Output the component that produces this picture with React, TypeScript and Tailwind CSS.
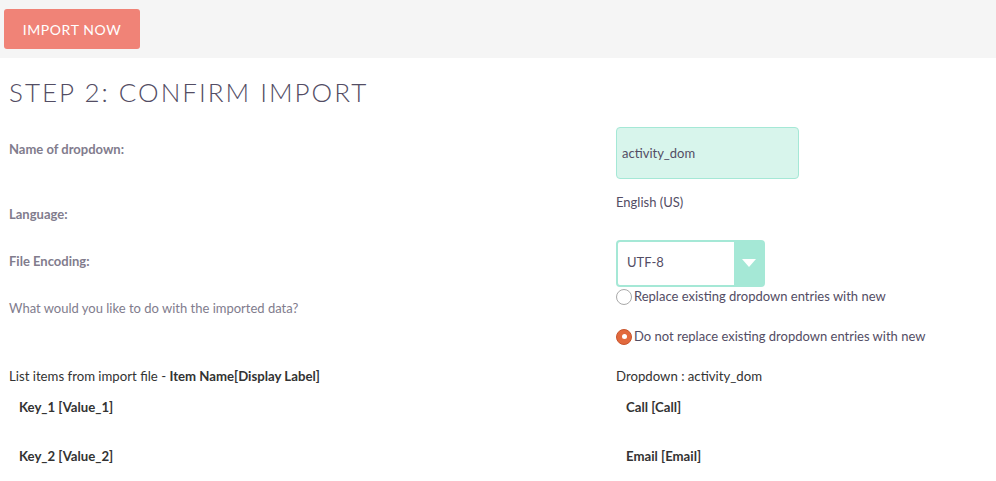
import React from 'react';

const font = { fontFamily: 'Lato, "Open Sans", sans-serif' };

function Radio({ checked, label }: { checked?: boolean; label: string }) {
  return (
    <label className="flex items-center text-[13px] text-[#534d64] leading-none">
      {checked ? (
        <span className="flex items-center justify-center w-4 h-4 rounded-full bg-[#e2693d] border border-[#c9552d]">
          <span className="w-[5px] h-[5px] rounded-full bg-white" />
        </span>
      ) : (
        <span className="w-4 h-4 rounded-full bg-white border border-[#a9a9a9]" />
      )}
      <span className="ml-[2px]">{label}</span>
    </label>
  );
}

export default function App() {
  return (
    <div className="w-[996px] h-[481px] bg-white overflow-hidden" style={font}>
      {/* Top bar */}
      <div className="h-[58px] bg-[#f5f5f5] pt-[9px] pl-[4px]">
        <button className="h-[40px] w-[136px] rounded-[3px] bg-[#f08377] text-white text-[14px] tracking-[0.6px] uppercase">
          Import Now
        </button>
      </div>

      {/* Heading */}
      <h1 className="ml-[9px] mt-[18px] text-[26px] leading-[32px] font-light tracking-[2px] text-[#534d64] uppercase">
        Step 2: Confirm Import
      </h1>

      <div className="mt-[19px]">
        {/* Name of dropdown */}
        <div className="flex">
          <div className="w-[607px] pl-[9px] pt-[13px] text-[13px] font-bold text-[#817c8d]">Name of dropdown:</div>
          <div className="ml-[9px] w-[183px] h-[52px] rounded-[4px] bg-[#d8f5ec] border border-[#a5e8d6] flex items-center pl-[5px] pt-[1px] text-[13px] text-[#534d64]">
            activity_dom
          </div>
        </div>

        {/* Language */}
        <div className="flex mt-[14px]">
          <div className="w-[607px] pl-[9px] pt-[12px] text-[13px] font-bold text-[#817c8d]">Language:</div>
          <div className="ml-[9px] text-[13px] text-[#534d64]">English (US)</div>
        </div>

        {/* File encoding */}
        <div className="flex mt-[15px]">
          <div className="w-[607px] pl-[9px] pt-[12px] text-[13px] font-bold text-[#817c8d]">File Encoding:</div>
          <div className="ml-[9px] w-[149px] h-[47px] rounded-[4px] border-2 border-[#a5e8d6] flex bg-white">
            <div className="flex-1 flex items-center pl-[9px] text-[13px] text-[#534d64]">UTF-8</div>
            <div className="w-[29px] bg-[#a5e8d6] flex items-center justify-center">
              <svg width="14" height="8" viewBox="0 0 14 8">
                <path d="M0 0 H14 L7 8 Z" fill="#fff" />
              </svg>
            </div>
          </div>
        </div>

        {/* Radios */}
        <div className="flex">
          <div className="w-[607px] pl-[9px] pt-[12px] text-[13px] text-[#817c8d]">What would you like to do with the imported data?</div>
          <div className="ml-[9px] pt-[2px] flex flex-col gap-[24px]">
            <Radio label="Replace existing dropdown entries with new" />
            <Radio checked label="Do not replace existing dropdown entries with new" />
          </div>
        </div>

        {/* List items */}
        <div className="flex mt-[22px] text-[13.2px] text-[#333]">
          <div className="w-[607px] pl-[9px]">
            List items from import file - <span className="font-bold">Item Name[Display Label]</span>
          </div>
          <div className="ml-[9px]">Dropdown : activity_dom</div>
        </div>

        <div className="flex mt-[12px] text-[13.2px] font-bold text-[#333]">
          <div className="w-[607px] pl-[19px]">Key_1 [Value_1]</div>
          <div className="ml-[19px]">Call [Call]</div>
        </div>

        <div className="flex mt-[29px] text-[13.2px] font-bold text-[#333]">
          <div className="w-[607px] pl-[19px]">Key_2 [Value_2]</div>
          <div className="ml-[19px]">Email [Email]</div>
        </div>
      </div>
    </div>
  );
}
